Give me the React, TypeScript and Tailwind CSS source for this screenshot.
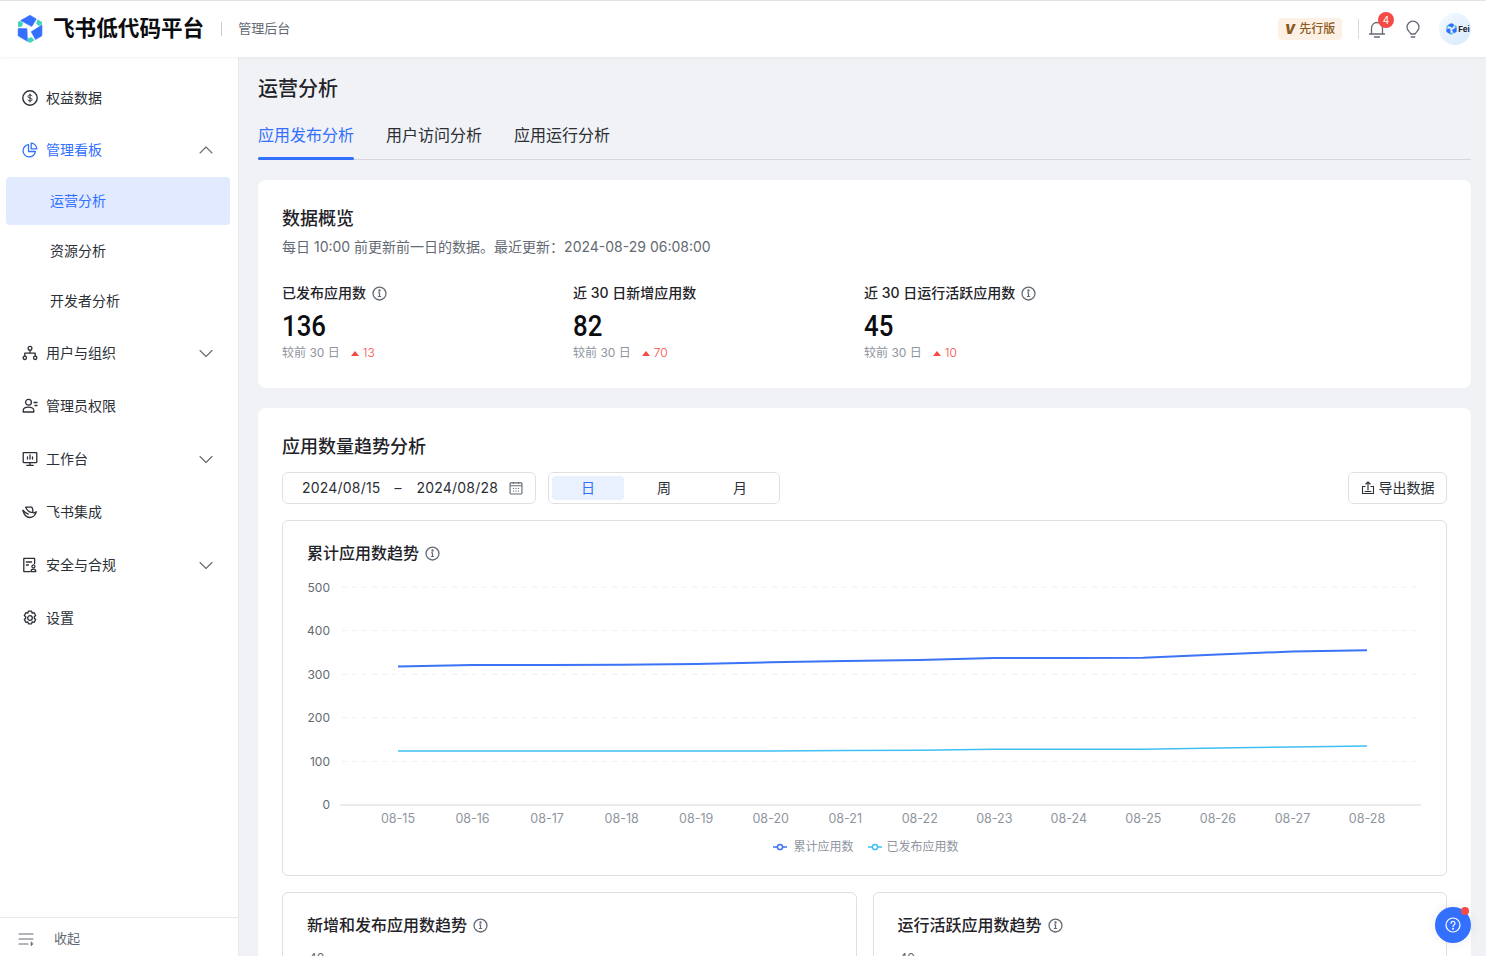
import React from "react";

const FONT = { fontFamily: 'Inter, "Noto Sans CJK SC", sans-serif' };

const Svg = ({ children, size = 16, className = "" }: { children: React.ReactNode; size?: number; className?: string }) => (
  <svg width={size} height={size} viewBox="0 0 16 16" fill="none" stroke="currentColor" strokeWidth="1.3" strokeLinecap="round" strokeLinejoin="round" className={`shrink-0 ${className}`}>
    {children}
  </svg>
);

const Info = () => (
  <Svg size={15} className="text-[#646a73]">
    <circle cx="8" cy="8" r="6.9" strokeWidth="1.4" />
    <path d="M8 7.2v4M7 7.2h1M6.8 11.2h2.4" />
    <circle cx="8" cy="4.8" r=".6" fill="currentColor" />
  </Svg>
);

const Chevron = ({ up }: { up?: boolean }) => (
  <svg width="16" height="16" viewBox="0 0 16 16" fill="none" stroke="#646a73" strokeWidth="1.1" strokeLinecap="round" strokeLinejoin="round" className="shrink-0">
    {up ? <path d="M2 11l6-6 6 6" /> : <path d="M2 5.5l6 6 6-6" />}
  </svg>
);

const icons: Record<string, React.ReactNode> = {
  coin: (
    <>
      <circle cx="8" cy="8" r="7.2" strokeWidth="1.4" />
      <path d="M10 5.8C9.6 5.2 8.9 5 8 5c-1.1 0-2 .5-2 1.5S7 7.8 8 8s2 .6 2 1.6S9.1 11 8 11c-.9 0-1.7-.3-2-.9M8 4v8" strokeWidth="1" />
    </>
  ),
  pie: (
    <>
      <path d="M6.5 2.6A6.2 6.2 0 1 0 13.4 9.5H6.5z" />
      <path d="M9.2 1.2A6 6 0 0 1 14.8 6.8H9.2z" />
    </>
  ),
  org: (
    <>
      <circle cx="8" cy="3.2" r="1.9" />
      <circle cx="2.8" cy="12.8" r="1.7" />
      <circle cx="13.2" cy="12.8" r="1.7" />
      <path d="M8 5.2v3M2.8 11V8.2h10.4V11" />
    </>
  ),
  admin: (
    <>
      <circle cx="6.5" cy="4.2" r="2.9" />
      <path d="M1.2 14v-1.4c0-2 2.2-3.4 5.3-3.4s5.3 1 5.3 3V14z" />
      <path d="M12 4.5h3M13 7.5h2" />
    </>
  ),
  desk: (
    <>
      <rect x="1.2" y="1.6" width="13.6" height="10" rx=".5" />
      <path d="M4.8 14.4h6.4M8 11.6v2.8M5.5 8V6M8 8V4M10.5 8V6" />
    </>
  ),
  feishu: (
    <>
      <path d="M1 6.5c1 4.2 3.5 7 6.8 7 3 0 5.2-1.8 6.6-5.6-1.4 1-3 1.1-4.4.6" />
      <path d="M3.6 3.2h6.2c1 1.6 1.2 3.2 1 5-2.6.8-5.4-1.6-7.2-5zM1 6.5c1.6 1.8 3.4 3 5.4 3.6" />
    </>
  ),
  safe: (
    <>
      <path d="M8 14.6H1.8V1.4h10.8v5" />
      <path d="M4.4 5h5.2M4.4 8h2" />
      <circle cx="11.4" cy="9.4" r="1.5" />
      <path d="M9 14.6c0-1.6 1-2.4 2.4-2.4s2.4.8 2.4 2.4z" />
    </>
  ),
  gear: (
    <>
      <path d="M6.4 1.2h3.2l.5 1.9 1.9-.5 1.7 2.9-1.4 1.3v1.4l1.4 1.3-1.7 2.9-1.9-.5-.5 1.9H6.4l-.5-1.9-1.9.5-1.7-2.9 1.4-1.3V6.8L2.3 5.5 4 2.6l1.9.5z" />
      <circle cx="8" cy="8" r="2.3" />
    </>
  ),
};

const NavRow = ({ icon, label, h, chevron, active }: { icon: string; label: string; h: string; chevron?: "up" | "down"; active?: boolean }) => (
  <div className={`flex items-center pl-[22px] pr-[24px] ${h}`}>
    <Svg className={active ? "text-[#3370ff]" : "text-[#2b2f36]"}>{icons[icon]}</Svg>
    <span className={`ml-2 text-[14px] leading-[22px] ${active ? "text-[#3370ff]" : "text-[#2b2f36]"}`}>{label}</span>
    <span className="ml-auto">{chevron && <Chevron up={chevron === "up"} />}</span>
  </div>
);

const SubRow = ({ label, active }: { label: string; active?: boolean }) => (
  <div className={`ml-[6px] mr-[8px] flex h-[48px] items-center rounded-[4px] pb-[2px] pl-[44px] text-[14px] ${active ? "bg-[#e1eaff] text-[#3370ff]" : "text-[#2b2f36]"}`}>{label}</div>
);

const Sidebar = () => (
  <aside className="flex w-[239px] shrink-0 flex-col border-r border-[#e8e9eb] bg-white">
    <nav className="flex-1 pt-[15px]">
      <NavRow icon="coin" label="权益数据" h="h-[52px]" />
      <NavRow icon="pie" label="管理看板" h="h-[52px]" chevron="up" active />
      <div className="mt-[1px] flex flex-col gap-[2px]">
        <SubRow label="运营分析" active />
        <SubRow label="资源分析" />
        <SubRow label="开发者分析" />
      </div>
      <div className="mt-[1.5px]">
        <NavRow icon="org" label="用户与组织" h="h-[53px]" chevron="down" />
        <NavRow icon="admin" label="管理员权限" h="h-[53px]" />
        <NavRow icon="desk" label="工作台" h="h-[53px]" chevron="down" />
        <NavRow icon="feishu" label="飞书集成" h="h-[53px]" />
        <NavRow icon="safe" label="安全与合规" h="h-[53px]" chevron="down" />
        <NavRow icon="gear" label="设置" h="h-[53px]" />
      </div>
    </nav>
    <div className="flex h-[39px] items-center border-t border-[#e8e9eb] pl-[18px] pt-[4px]">
      <svg width="16" height="16" viewBox="0 0 16 16" fill="none" stroke="#646a73" strokeWidth="1.2" strokeLinecap="round">
        <path d="M1 3h14M1 8h14M1 13h9" />
        <path d="M13 11v4l2-2z" fill="#646a73" strokeWidth=".5" />
      </svg>
      <span className="ml-[20px] text-[13px] text-[#646a73]">收起</span>
    </div>
  </aside>
);

const Blade = ({ r }: { r: number }) => (
  <g transform={`rotate(${r} 13 14)`}>
    <path d="M3.6 5.6L13 .3l6.3 3.7-4.5 7.5z" fill="#3370ff" stroke="#3370ff" strokeWidth=".6" strokeLinejoin="round" />
    <path d="M20.6 4.6L25 7v2.4l-3.2 1.6-2.6-2.6z" fill="#3ed6bb" />
  </g>
);

const Logo = ({ size = 26 }: { size?: number }) => (
  <svg width={size} height={(size * 28) / 26} viewBox="0 0 26 28" className="shrink-0">
    <Blade r={0} />
    <Blade r={120} />
    <Blade r={240} />
  </svg>
);

const Header = () => (
  <header className="relative z-10 flex h-[57px] shrink-0 items-center border-t border-[#e2e3e5] bg-white pl-[17px] pr-[15px] shadow-[0_1px_3px_rgba(0,0,0,0.05)]">
    <Logo />
    <span className="ml-[10px] text-[21.6px] font-bold leading-none text-[#0b0d11]">飞书低代码平台</span>
    <span className="ml-[17px] h-[14px] w-px bg-[#c9cbcf]" />
    <span className="ml-[16px] text-[13px] text-[#646a73]">管理后台</span>
    <div className="ml-auto flex items-center">
      <div className="flex h-[22px] w-[64px] items-center justify-center gap-[4px] rounded-[4px] bg-[#fdf1e5]">
        <span className="text-[13px] font-black italic leading-none text-[#8a5a22]">V</span>
        <span className="text-[12px] font-medium text-[#8a5a22]">先行版</span>
      </div>
      <span className="ml-[16px] h-[20px] w-px bg-[#d8dadd]" />
      <div className="relative ml-[9px]">
        <svg width="18" height="18" viewBox="0 0 18 18" fill="none" stroke="#646a73" strokeWidth="1.3" strokeLinecap="round" strokeLinejoin="round" className="block">
          <path d="M1.5 14h15M3.5 14V8a5.5 5.5 0 0 1 11 0v6M6.5 17h5" />
        </svg>
        <span className="absolute left-[10px] top-[-8px] flex h-[16px] w-[16px] items-center justify-center rounded-full bg-[#f54a45] text-[10px] text-white">4</span>
      </div>
      <svg width="18" height="18" viewBox="0 0 18 18" fill="none" stroke="#646a73" strokeWidth="1.3" strokeLinecap="round" strokeLinejoin="round" className="ml-[18px]">
        <path d="M6.8 14c-.2-1.6-3.8-3-3.8-6.8a6 6 0 0 1 12 0c0 3.8-3.6 5.2-3.8 6.8z" />
        <path d="M7.2 17h3.6" />
      </svg>
      <div className="ml-[17px] flex h-[32px] w-[32px] items-center justify-center overflow-hidden rounded-full bg-gradient-to-br from-[#f6fafe] to-[#d6e9fd]">
        <span className="ml-[6px]"><Logo size={11} /></span>
        <span className="ml-[1px] text-[8px] font-bold leading-none text-[#1f2329]">Fei</span>
      </div>
    </div>
  </header>
);

const Metric = ({ label, info, value, delta }: { label: string; info?: boolean; value: string; delta: string }) => (
  <div className="w-[291px]">
    <div className="flex h-[22px] items-center gap-[6px] text-[14px] font-medium leading-[22px] text-[#1f2329]">
      <span>{label}</span>
      {info && <Info />}
    </div>
    <div className="mt-[5px] h-[34px] origin-left scale-x-[0.86] text-[30px] font-medium leading-[34px] text-[#0b0d11] [font-family:Roboto,sans-serif]">{value}</div>
    <div className="mt-[1px] flex h-[18px] items-center text-[12px] leading-[18px] text-[#8f959e]">
      <span>较前 30 日</span>
      <span className="ml-[11px] h-0 w-0 border-x-[4.5px] border-b-[5px] border-x-transparent border-b-[#f54a45]" />
      <span className="ml-[4px] font-light text-[#f54a45]">{delta}</span>
    </div>
  </div>
);

const labels = ["08-15", "08-16", "08-17", "08-18", "08-19", "08-20", "08-21", "08-22", "08-23", "08-24", "08-25", "08-26", "08-27", "08-28"];
const blue = [666.5, 665, 665, 664.8, 664, 662.3, 661, 660, 658, 658, 657.8, 654.5, 651.5, 650.3];
const cyan = [751, 751, 751, 751, 751, 751, 750.5, 750.3, 749.3, 749.3, 749.2, 748, 747, 746];
const px = (i: number) => 398 + (969 / 13) * i;
const pts = (a: number[]) => a.map((y, i) => `${px(i) - 283},${y - 570}`).join(" ");
const ticks = [["500", 587], ["400", 630.6], ["300", 674.2], ["200", 717.8], ["100", 761.4]] as const;

const LineChart = () => (
  <svg width="1163" height="256" viewBox="0 0 1163 256" className="block" fontFamily="Inter, sans-serif">
    {ticks.map(([t, y]) => (
      <g key={t}>
        <text x="47" y={y - 570 + 4.5} textAnchor="end" fontSize="12" fill="#646a73">{t}</text>
        <line x1="59" x2="1138" y1={y - 570} y2={y - 570} stroke="#eef0f2" strokeDasharray="5 5" />
      </g>
    ))}
    <text x="47" y={239} textAnchor="end" fontSize="12" fill="#646a73">0</text>
    <line x1="57" x2="1138" y1="235" y2="235" stroke="#e3e5e8" strokeWidth="1.5" />
    {labels.map((l, i) => (
      <text key={l} x={px(i) - 283} y="252.5" textAnchor="middle" fontSize="12.5" fill="#8f959e">{l}</text>
    ))}
    <polyline points={pts(blue)} fill="none" stroke="#3b74f6" strokeWidth="2" />
    <polyline points={pts(cyan)} fill="none" stroke="#3fc0f2" strokeWidth="1.6" />
  </svg>
);

const LegendMark = ({ color }: { color: string }) => (
  <svg width="14" height="8" viewBox="0 0 14 8" fill="none" stroke={color} strokeWidth="1.5" className="block shrink-0">
    <path d="M0 4h4M10 4h4" />
    <circle cx="7" cy="4" r="2.6" />
  </svg>
);

const TitleInfo = ({ text }: { text: string }) => (
  <div className="flex h-[24px] items-center gap-[6px] text-[16px] font-medium text-[#1f2329]">
    <span>{text}</span>
    <Info />
  </div>
);

const Main = () => (
  <main className="min-w-0 flex-1 overflow-hidden bg-[#f1f2f5] pl-[19px] pr-[15px]">
    <h1 className="mt-[17px] text-[20px] font-medium leading-[30px] text-[#1f2329]">运营分析</h1>
    <div className="mt-[19px] flex h-[37px] gap-[32px] border-b border-[#d5d7da] text-[16px] text-[#2b2f36]">
      <div className="relative leading-[24px] text-[#3370ff]">
        应用发布分析
        <span className="absolute inset-x-0 bottom-[-1px] h-[3px] rounded-full bg-[#3370ff]" />
      </div>
      <div className="leading-[24px]">用户访问分析</div>
      <div className="leading-[24px]">应用运行分析</div>
    </div>
    <section className="mt-[20px] h-[208px] rounded-[8px] bg-white px-[24px] pt-[25px]">
      <h2 className="text-[18px] font-medium leading-[28px] text-[#1f2329]">数据概览</h2>
      <p className="mt-[3px] text-[14px] leading-[22px] text-[#646a73]">每日 10:00 前更新前一日的数据。最近更新：2024-08-29 06:08:00</p>
      <div className="mt-[24px] flex">
        <Metric label="已发布应用数" info value="136" delta="13" />
        <Metric label="近 30 日新增应用数" value="82" delta="70" />
        <Metric label="近 30 日运行活跃应用数" info value="45" delta="10" />
      </div>
    </section>
    <section className="mt-[20px] rounded-[8px] bg-white px-[24px] pt-[25px] pb-[16px]">
      <h2 className="text-[18px] font-medium leading-[28px] text-[#1f2329]">应用数量趋势分析</h2>
      <div className="mt-[11px] flex items-center text-[14px] text-[#2b2f36]">
        <div className="flex h-[32px] w-[254px] items-center rounded-[6px] border border-[#dee0e3] pl-[19px] pr-[12px]">
          <span className="pb-[2px] tracking-[0.2px]">2024/08/15</span>
          <span className="ml-[14px] pb-[2px]">–</span>
          <span className="ml-[15px] pb-[2px] tracking-[0.2px]">2024/08/28</span>
          <svg width="14" height="14" viewBox="0 0 16 16" fill="none" stroke="#646a73" strokeWidth="1.3" className="ml-auto">
            <rect x="1.2" y="2.2" width="13.6" height="12.6" rx="1" />
            <path d="M1.2 5.4h13.6M5 1v2M11 1v2" />
            <path d="M4.5 8.5h1.4M7.3 8.5h1.4M10.1 8.5h1.4M4.5 11.5h1.4M7.3 11.5h1.4M10.1 11.5h1.4" strokeWidth="1.1" />
          </svg>
        </div>
        <div className="ml-[12px] flex h-[32px] w-[232px] items-center rounded-[6px] border border-[#dee0e3] pl-[3px]">
          <span className="flex h-[24px] w-[72px] items-center justify-center rounded-[4px] bg-[#e9f0fe] pb-[2px] text-[#3370ff]">日</span>
          <span className="flex w-[80px] justify-center pb-[2px]">周</span>
          <span className="flex w-[72px] justify-center pb-[2px]">月</span>
        </div>
        <div className="ml-auto flex h-[32px] w-[99px] items-center justify-center gap-[4px] rounded-[6px] border border-[#dee0e3]">
          <svg width="14" height="14" viewBox="0 0 14 14" fill="none" stroke="#2b2f36" strokeWidth="1.1" strokeLinecap="round" strokeLinejoin="round">
            <path d="M1.5 5.5v7h11v-7h-2.5M4 5.5H1.5M7 9V1M4.8 3L7 1l2.2 2M4 10.5h6" />
          </svg>
          <span className="pb-[2px]">导出数据</span>
        </div>
      </div>
      <div className="mt-[16px] h-[356px] rounded-[6px] border border-[#dee0e3] pt-[20px]">
        <div className="pl-[24px]"><TitleInfo text="累计应用数趋势" /></div>
        <div className="mt-[5px]"><LineChart /></div>
        <div className="mt-[12px] flex items-center justify-center pl-[3px] text-[12px] leading-[18px] text-[#8f959e]">
          <LegendMark color="#3b74f6" />
          <span className="ml-[6px]">累计应用数</span>
          <span className="ml-[14px]"><LegendMark color="#3fc0f2" /></span>
          <span className="ml-[5px]">已发布应用数</span>
        </div>
      </div>
      <div className="mt-[16px] flex gap-[16px]">
        <div className="h-[200px] flex-1 rounded-[6px] border border-[#dee0e3] px-[24px] pt-[20px]">
          <TitleInfo text="新增和发布应用数趋势" />
          <div className="ml-[2px] mt-[12px] text-[12px] leading-[18px] text-[#646a73]">40</div>
        </div>
        <div className="h-[200px] flex-1 rounded-[6px] border border-[#dee0e3] px-[24px] pt-[20px]">
          <TitleInfo text="运行活跃应用数趋势" />
          <div className="ml-[2px] mt-[12px] text-[12px] leading-[18px] text-[#646a73]">40</div>
        </div>
      </div>
    </section>
  </main>
);

export default function App() {
  return (
    <div className="relative flex h-screen flex-col overflow-hidden bg-white" style={FONT}>
      <Header />
      <div className="flex min-h-0 flex-1">
        <Sidebar />
        <Main />
      </div>
      <button className="absolute bottom-[13px] right-[15px] flex h-[36px] w-[36px] items-center justify-center rounded-full bg-[#3370ff] shadow-[0_0_12px_rgba(0,0,0,0.08)]">
        <svg width="16" height="16" viewBox="0 0 16 16" fill="none" stroke="#fff" strokeWidth="1.2" strokeLinecap="round">
          <circle cx="8" cy="8" r="7" />
          <path d="M6 6.3a2 2 0 1 1 3 1.7c-.7.4-1 .8-1 1.5" />
          <circle cx="8" cy="11.8" r=".4" fill="#fff" />
        </svg>
        <span className="absolute right-[2px] top-[0px] h-[8px] w-[8px] rounded-full bg-[#f54a45]" />
      </button>
    </div>
  );
}
